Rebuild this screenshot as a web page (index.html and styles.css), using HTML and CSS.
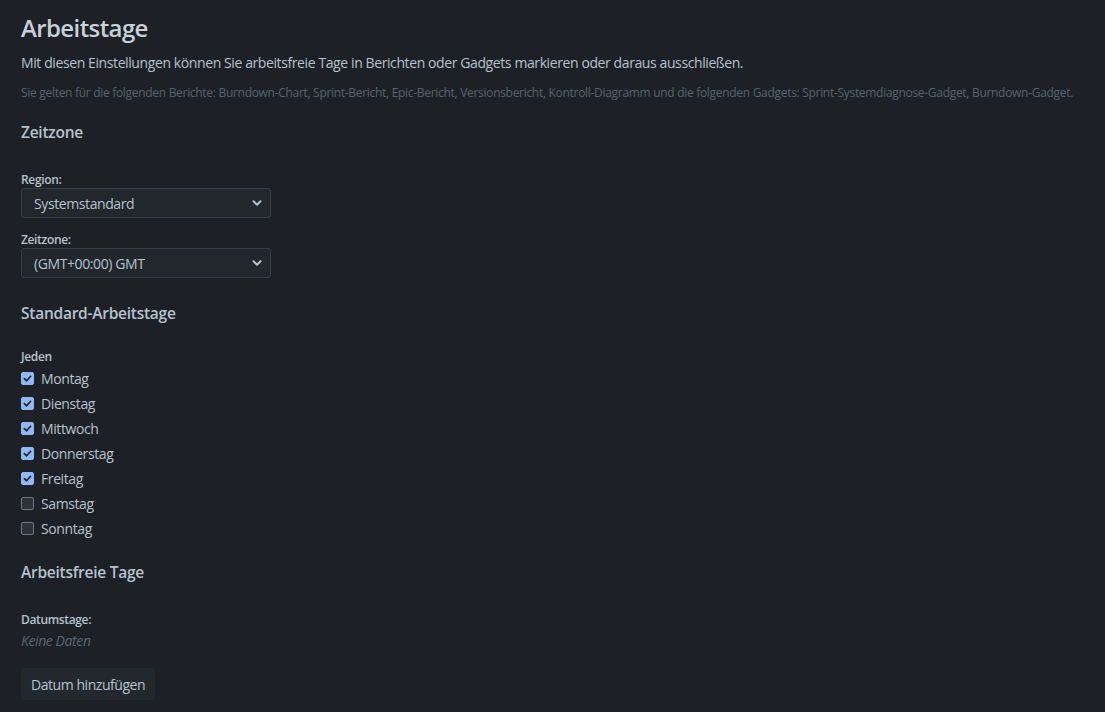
FILE: index.html
```html
<!DOCTYPE html>
<html>
<head>
<title>Arbeitstage</title>
<link rel="stylesheet" href="styles.css">
</head>
<body>

<div id="page">
  <h1>Arbeitstage</h1>
  <p class="intro">Mit diesen Einstellungen können Sie arbeitsfreie Tage in Berichten oder Gadgets markieren oder daraus ausschließen.</p>
  <p class="note">Sie gelten für die folgenden Berichte: Burndown-Chart, Sprint-Bericht, Epic-Bericht, Versionsbericht, Kontroll-Diagramm und die folgenden Gadgets: Sprint-Systemdiagnose-Gadget, Burndown-Gadget.</p>

  <h3>Zeitzone</h3>

  <div class="field first">
    <label class="field-label">Region:</label>
    <div class="select">
      <span>Systemstandard</span>
      <svg width="12" height="12" viewBox="0 0 12 12"><path d="M2.5 4.3 6 7.7 9.5 4.3" fill="none" stroke="#b6c2cf" stroke-width="2" stroke-linecap="round" stroke-linejoin="round"/></svg>
    </div>
  </div>

  <div class="field">
    <label class="field-label">Zeitzone:</label>
    <div class="select">
      <span>(GMT+00:00) GMT</span>
      <svg width="12" height="12" viewBox="0 0 12 12"><path d="M2.5 4.3 6 7.7 9.5 4.3" fill="none" stroke="#b6c2cf" stroke-width="2" stroke-linecap="round" stroke-linejoin="round"/></svg>
    </div>
  </div>

  <h3 class="spaced">Standard-Arbeitstage</h3>

  <div class="days">
    <label class="field-label">Jeden</label>
    <div class="day"><span class="box checked"><svg width="11" height="11" viewBox="0 0 12 12"><path d="M2.6 6.2 5 8.5 9.4 3.6" fill="none" stroke="#1d2125" stroke-width="1.8" stroke-linecap="round" stroke-linejoin="round"/></svg></span>Montag</div>
    <div class="day"><span class="box checked"><svg width="11" height="11" viewBox="0 0 12 12"><path d="M2.6 6.2 5 8.5 9.4 3.6" fill="none" stroke="#1d2125" stroke-width="1.8" stroke-linecap="round" stroke-linejoin="round"/></svg></span>Dienstag</div>
    <div class="day"><span class="box checked"><svg width="11" height="11" viewBox="0 0 12 12"><path d="M2.6 6.2 5 8.5 9.4 3.6" fill="none" stroke="#1d2125" stroke-width="1.8" stroke-linecap="round" stroke-linejoin="round"/></svg></span>Mittwoch</div>
    <div class="day"><span class="box checked"><svg width="11" height="11" viewBox="0 0 12 12"><path d="M2.6 6.2 5 8.5 9.4 3.6" fill="none" stroke="#1d2125" stroke-width="1.8" stroke-linecap="round" stroke-linejoin="round"/></svg></span>Donnerstag</div>
    <div class="day"><span class="box checked"><svg width="11" height="11" viewBox="0 0 12 12"><path d="M2.6 6.2 5 8.5 9.4 3.6" fill="none" stroke="#1d2125" stroke-width="1.8" stroke-linecap="round" stroke-linejoin="round"/></svg></span>Freitag</div>
    <div class="day"><span class="box"></span>Samstag</div>
    <div class="day"><span class="box"></span>Sonntag</div>
  </div>

  <h3 class="tight">Arbeitsfreie Tage</h3>

  <div class="field first">
    <label class="field-label">Datumstage:</label>
    <div class="empty">Keine Daten</div>
  </div>

  <button class="add">Datum hinzufügen</button>
</div>

</body>
</html>
```

FILE: styles.css
```css
html, body {
  background-color: #1d2125;
}
body {
  margin: 0;
  font-family: "Open Sans", "Noto Sans", sans-serif;
  font-size: 14px;
  letter-spacing: -0.4px;
  color: #b6c2cf;
}
#page {
  padding: 12px 21px 0 21px;
}
h1 {
  margin: 0;
  font-size: 24px;
  font-weight: 600;
  line-height: 32px;
  letter-spacing: -0.6px;
  color: #c7d1db;
}
.intro {
  margin: 9px 0 0 0;
  line-height: 20px;
}
.note {
  margin: 12px 0 0 0;
  font-size: 12px;
  letter-spacing: -0.3px;
  line-height: 16px;
  color: #56636f;
}
h3 {
  margin: 20px 0 0 0;
  font-size: 15.5px;
  font-weight: 600;
  line-height: 22px;
  letter-spacing: -0.25px;
  color: #b6c2cf;
}
h3.spaced {
  margin-top: 24px;
}
h3.tight {
  margin-top: 20px;
}
.field {
  margin-top: 14px;
}
.field.first {
  margin-top: 29px;
}
.field-label {
  display: block;
  font-size: 12px;
  font-weight: 600;
  line-height: 16px;
  letter-spacing: -0.35px;
  color: #b6c2cf;
}
.select {
  width: 250px;
  height: 30px;
  box-sizing: border-box;
  display: flex;
  align-items: center;
  justify-content: space-between;
  padding: 0 7px 0 12px;
  background-color: #22272b;
  border: 1px solid #363d45;
  border-radius: 3px;
}
.select svg {
  display: block;
}
.days {
  margin-top: 25px;
}
.days .field-label {
  margin-bottom: 1px;
}
.day {
  display: flex;
  align-items: center;
  height: 25px;
}
.box {
  width: 13px;
  height: 13px;
  box-sizing: border-box;
  border: 1px solid #6b7785;
  border-radius: 2px;
  background-color: #2c3238;
  margin-right: 7px;
  display: flex;
  align-items: center;
  justify-content: center;
}
.box.checked {
  border-color: #8fb8f6;
  background-color: #8fb8f6;
}
.empty {
  margin-top: 3px;
  font-style: italic;
  line-height: 20px;
  color: #5a6673;
}
.add {
  margin-top: 17px;
  height: 32px;
  padding: 0 10px;
  border: none;
  border-radius: 3px;
  background-color: #23282d;
  color: #b6c2cf;
  font-family: "Open Sans", "Noto Sans", sans-serif;
  font-size: 14px;
  letter-spacing: -0.45px;
}
```
